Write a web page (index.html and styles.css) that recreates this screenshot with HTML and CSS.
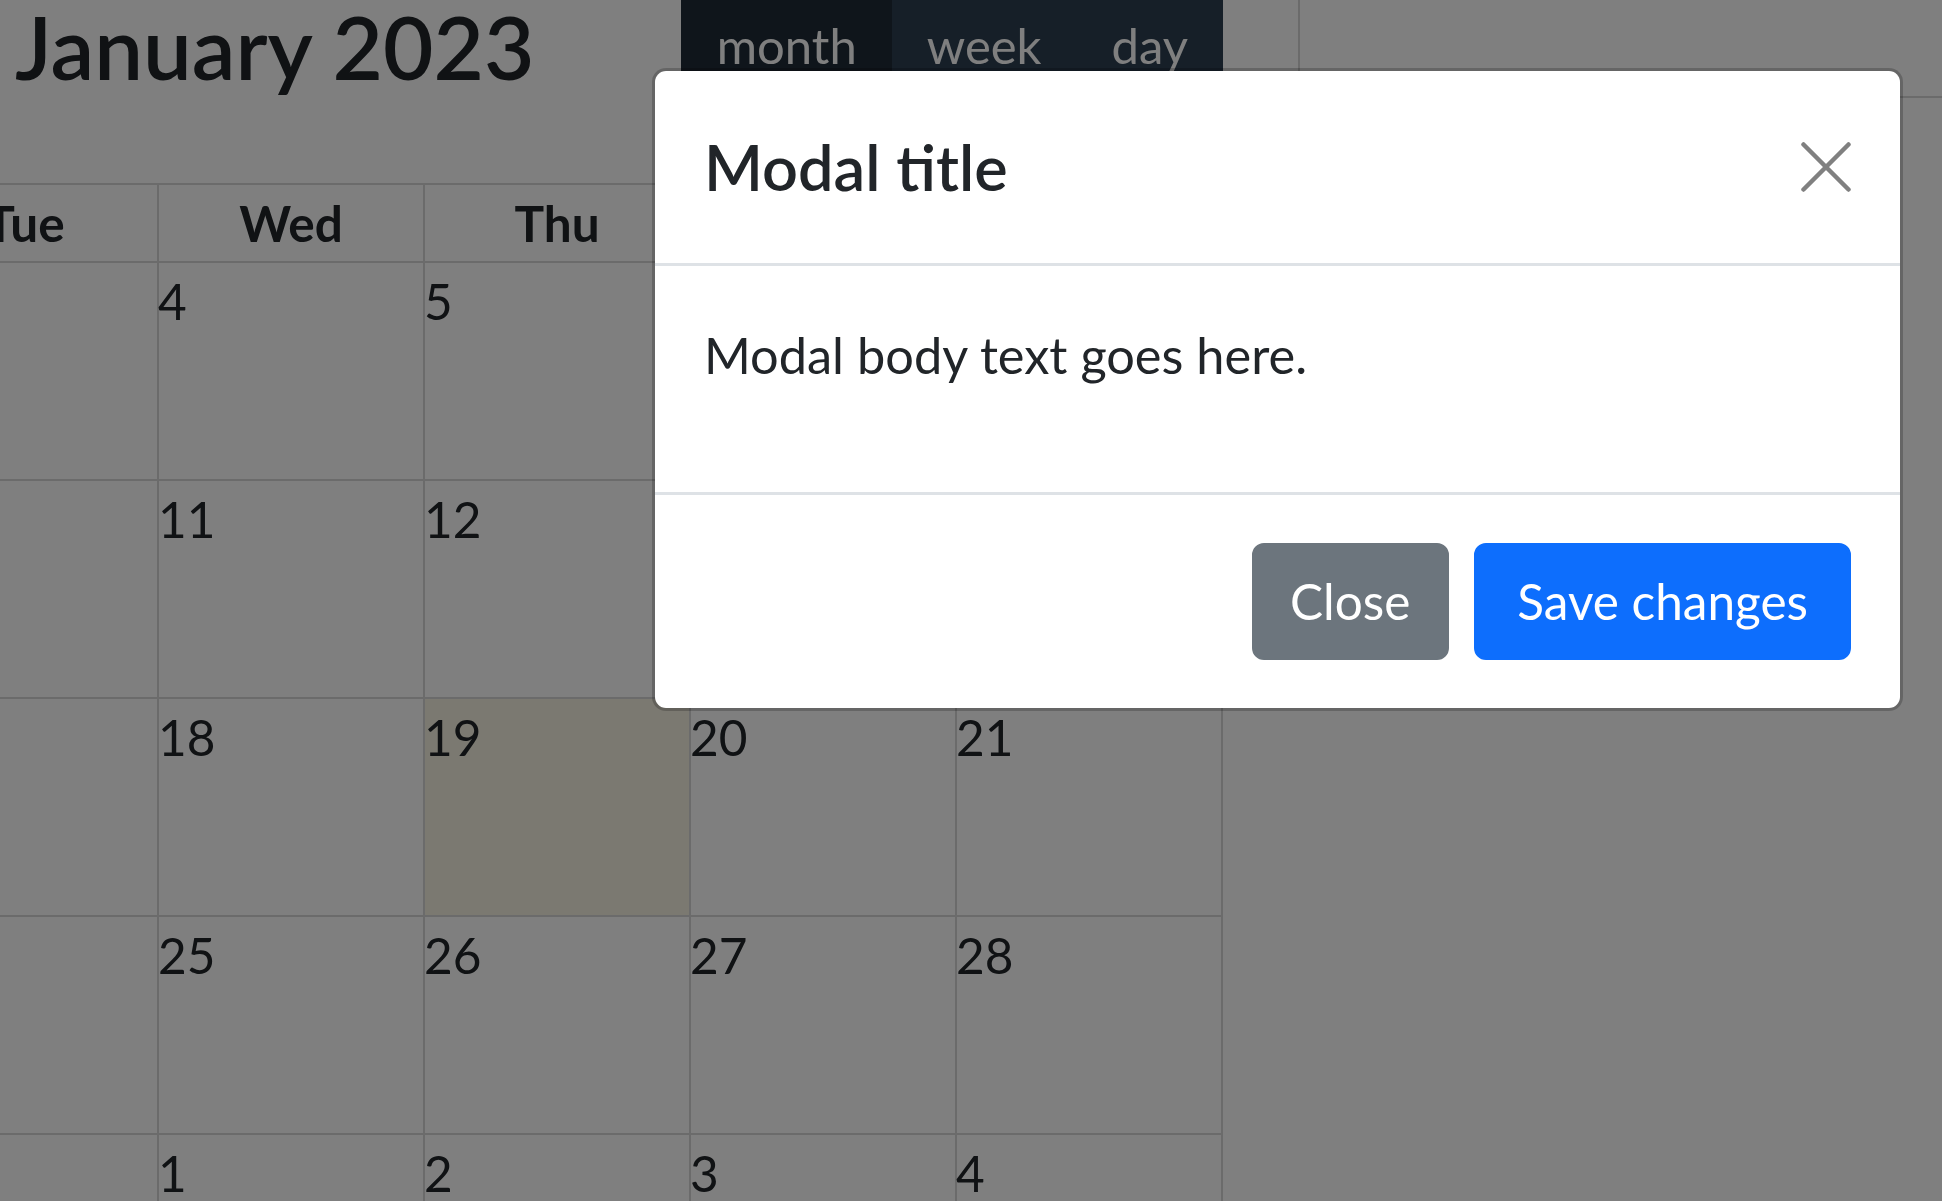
FILE: index.html
```html
<!DOCTYPE html>
<html lang="en">
<head>
    <meta charset="UTF-8">
    <meta name="viewport" content="width=device-width, initial-scale=1.0">
    <title>Calendar</title>
    <link rel="stylesheet" href="styles.css">
</head>
<body>
    <div class="page">
        <div class="calendar">
            <div class="toolbar">
                <div class="chunk">
                    <div class="btn-group">
                        <button class="fc-btn">&lsaquo;</button>
                        <button class="fc-btn">&rsaquo;</button>
                    </div>
                    <button class="fc-btn">today</button>
                </div>
                <h2 class="cal-title">January 2023</h2>
                <div class="chunk btn-group view-switch">
                    <button class="fc-btn active">month</button>
                    <button class="fc-btn">week</button>
                    <button class="fc-btn">day</button>
                </div>
            </div>

            <div class="grid">
                <div class="col-head">Sun</div>
                <div class="col-head">Mon</div>
                <div class="col-head">Tue</div>
                <div class="col-head">Wed</div>
                <div class="col-head">Thu</div>
                <div class="col-head">Fri</div>
                <div class="col-head">Sat</div>

                <div class="day"><span class="num">1</span></div>
                <div class="day"><span class="num">2</span></div>
                <div class="day"><span class="num">3</span></div>
                <div class="day"><span class="num">4</span></div>
                <div class="day"><span class="num">5</span></div>
                <div class="day"><span class="num">6</span></div>
                <div class="day"><span class="num">7</span></div>

                <div class="day"><span class="num">8</span></div>
                <div class="day"><span class="num">9</span></div>
                <div class="day"><span class="num">10</span></div>
                <div class="day"><span class="num">11</span></div>
                <div class="day"><span class="num">12</span></div>
                <div class="day"><span class="num">13</span></div>
                <div class="day"><span class="num">14</span></div>

                <div class="day"><span class="num">15</span></div>
                <div class="day"><span class="num">16</span></div>
                <div class="day"><span class="num">17</span></div>
                <div class="day"><span class="num">18</span></div>
                <div class="day today"><span class="num">19</span></div>
                <div class="day"><span class="num">20</span></div>
                <div class="day"><span class="num">21</span></div>

                <div class="day"><span class="num">22</span></div>
                <div class="day"><span class="num">23</span></div>
                <div class="day"><span class="num">24</span></div>
                <div class="day"><span class="num">25</span></div>
                <div class="day"><span class="num">26</span></div>
                <div class="day"><span class="num">27</span></div>
                <div class="day"><span class="num">28</span></div>

                <div class="day"><span class="num">29</span></div>
                <div class="day"><span class="num">30</span></div>
                <div class="day"><span class="num">31</span></div>
                <div class="day"><span class="num">1</span></div>
                <div class="day"><span class="num">2</span></div>
                <div class="day"><span class="num">3</span></div>
                <div class="day"><span class="num">4</span></div>

                <div class="day"><span class="num">5</span></div>
                <div class="day"><span class="num">6</span></div>
                <div class="day"><span class="num">7</span></div>
                <div class="day"><span class="num">8</span></div>
                <div class="day"><span class="num">9</span></div>
                <div class="day"><span class="num">10</span></div>
                <div class="day"><span class="num">11</span></div>
            </div>
        </div>

        <div class="aside"></div>
    </div>

    <div class="modal-backdrop"></div>

    <div class="modal">
        <div class="modal-dialog">
            <div class="modal-content">
                <div class="modal-header">
                    <h5 class="modal-title">Modal title</h5>
                    <button class="btn-close" aria-label="Close">
                        <svg width="50" height="50" viewBox="0 0 50 50">
                            <path d="M2.5 2.5 L47.5 47.5 M47.5 2.5 L2.5 47.5" stroke="#808080" stroke-width="4.5" stroke-linecap="round" fill="none"/>
                        </svg>
                    </button>
                </div>
                <div class="modal-body">
                    <p>Modal body text goes here.</p>
                </div>
                <div class="modal-footer">
                    <button class="btn btn-secondary">Close</button>
                    <button class="btn btn-primary">Save changes</button>
                </div>
            </div>
        </div>
    </div>
</body>
</html>
```
FILE: styles.css
```css
* {
    box-sizing: border-box;
}
body {
    margin: 0;
    overflow: hidden;
    background: #fff;
    color: #212529;
    font-family: Lato, "Noto Sans", sans-serif;
    font-size: 49.5px;
}

.page {
    display: flex;
    align-items: flex-start;
    gap: 75px;
}

/* calendar, scrolled so that Sun/Mon sit off the left edge */
.calendar {
    flex: none;
    width: 1864px;
    margin-left: -641px;
}
.toolbar {
    display: grid;
    grid-template-columns: 656px 1fr auto;
    align-items: start;
    height: 108px;
    margin-bottom: 75px;
}
.chunk {
    display: flex;
}
.cal-title {
    margin: -5px 0 0;
    font-size: 87px;
    font-weight: 600;
    line-height: 104px;
    color: #212529;
}
.view-switch {
    margin-top: -11px;
}
.btn-group {
    display: flex;
}
.fc-btn {
    font-family: inherit;
    font-size: 49px;
    line-height: 1.5;
    padding: 20px 35px;
    background: #2c3e50;
    border: 0;
    color: #fff;
}
.fc-btn.active {
    background: #1e2b37;
    padding-left: 36px;
}

.grid {
    display: grid;
    grid-template-columns: repeat(7, 264px);
    grid-template-rows: 76px repeat(6, 216px);
    gap: 2px;
    padding: 2px;
    background: #d6d6d6;
}
.col-head {
    background: #fff;
    padding: 3px 0;
    line-height: 70px;
    font-weight: 700;
    text-align: center;
}
.day {
    background: #fff;
}
.day.today {
    background: #f6f3e2;
}
.num {
    display: block;
    line-height: 76px;
    margin-left: -1px;
}

.aside {
    flex: 1;
    height: 98px;
    border-left: 2px solid #d6d6d6;
    border-bottom: 2px solid #d6d6d6;
}

/* modal */
.modal-backdrop {
    position: fixed;
    inset: 0;
    background: rgba(0, 0, 0, 0.5);
}
.modal {
    position: fixed;
    inset: 0;
}
.modal-dialog {
    width: 1251px;
    margin: 68px 0 0 652px;
}
.modal-content {
    background: #fff;
    background-clip: padding-box;
    border: 3px solid rgba(0, 0, 0, 0.2);
    border-radius: 14px;
}
.modal-header {
    display: flex;
    align-items: center;
    justify-content: space-between;
    padding: 48px 49px 48px 49px;
    border-bottom: 3px solid #dee2e6;
}
.modal-title {
    margin: 0;
    font-size: 63px;
    font-weight: 600;
    line-height: 96px;
}
.btn-close {
    display: flex;
    padding: 0;
    border: 0;
    background: none;
}
.modal-body {
    padding: 51px 49px 50px;
}
.modal-body p {
    margin: 0 0 50px;
    font-size: 50.5px;
    line-height: 75px;
}
.modal-footer {
    display: flex;
    justify-content: flex-end;
    gap: 25px;
    padding: 48px 49px;
    border-top: 3px solid #dee2e6;
}
.btn {
    font-family: inherit;
    font-size: 49.5px;
    line-height: 75px;
    padding: 18px 37px;
    border: 3px solid transparent;
    border-radius: 12px;
    color: #fff;
}
.btn-secondary {
    background: #6c757d;
    border-color: #6c757d;
    padding: 18px 36px 18px 35px;
}
.btn-primary {
    background: #0d6efd;
    border-color: #0d6efd;
    padding: 18px 40px;
}
```
